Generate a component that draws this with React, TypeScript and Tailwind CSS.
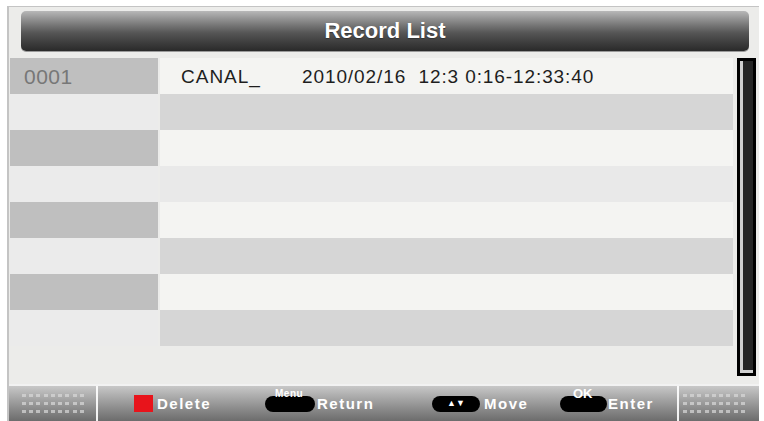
import React from 'react';

const leftShades = ['#bfbfbf', '#ebebeb', '#bfbfbf', '#ebebeb', '#bfbfbf', '#ebebeb', '#bfbfbf', '#ebebeb'];
const rightShades = ['#f4f4f2', '#d6d6d6', '#f4f4f2', '#e9e9e9', '#f4f4f2', '#d6d6d6', '#f4f4f2', '#d6d6d6'];

function DotBlock() {
  return (
    <div className="grid grid-cols-9 gap-x-[3px] gap-y-[5px] w-[62px]">
      {Array.from({ length: 27 }).map((_, i) => (
        <div key={i} className="h-[3px] w-[4px] bg-[#d8d8d8]/70" />
      ))}
    </div>
  );
}

export default function App() {
  return (
    <div className="w-[764px] h-[421px] bg-white overflow-hidden pt-[6px] pl-[7px] pr-[5px] font-['Liberation_Sans',Arial,sans-serif]">
      <div className="h-full bg-[#ececea] border-l-2 border-t border-[#c4c4c4] flex flex-col">
        {/* title bar */}
        <div className="ml-[12px] mr-[10px] mt-[4px] h-[40px] rounded-[5px] bg-linear-to-b from-[#b8b8b8] via-[#555555] via-55% to-[#2a2a2a] flex items-center justify-center shadow-[0_1px_0_#9a9a9a]">
          <span className="text-white text-[22px] font-bold leading-none [text-shadow:0_1px_1px_#333]">Record List</span>
        </div>

        {/* list */}
        <div className="mt-[7px] pl-[1px] flex">
          <div className="w-[723px] flex flex-col">
            {leftShades.map((shade, i) => (
              <div key={i} className="h-[36px] grid grid-cols-[148px_1fr] gap-x-[2px]">
                <div className="flex items-center pl-[14px]" style={{ backgroundColor: shade }}>
                  {i === 0 && (
                    <span className="text-[21px] text-[#777777] tracking-[0.5px] leading-none">0001</span>
                  )}
                </div>
                <div className="flex items-center" style={{ backgroundColor: rightShades[i] }}>
                  {i === 0 && (
                    <>
                      <span className="ml-[21px] w-[121px] text-[19px] text-[#1e1e1e] tracking-[1px] leading-none">CANAL_</span>
                      <span className="text-[19px] text-[#1e1e1e] tracking-[0.9px] leading-none whitespace-pre">2010/02/16  12:3 0:16-12:33:40</span>
                    </>
                  )}
                </div>
              </div>
            ))}
          </div>
          <div className="ml-[4px] w-[19px] h-[318px] bg-black p-[3px]">
            <div className="h-full border-l-[3px] border-b-[3px] border-[#d0d0d0] bg-[#262626]" />
          </div>
        </div>

        <div className="flex-1" />

        {/* footer */}
        <div className="h-[37px] border-t-2 border-[#f2f2f2] bg-linear-to-b from-[#c8c8c8] to-[#6c6c6c] flex items-center">
          <div className="ml-[13px]"><DotBlock /></div>
          <div className="ml-[12px] w-[2px] h-full bg-white/90" />

          <div className="ml-[36px] w-[19px] h-[17px] bg-[#e8141b]" />
          <span className="ml-[4px] w-[54px] text-white font-bold text-[15px] tracking-[1.5px] leading-none">Delete</span>

          <div className="ml-[54px] relative w-[50px] h-[16px] rounded-full bg-black">
            <span className="absolute -top-[7px] left-[10px] text-white font-bold text-[10px] leading-none tracking-[0.5px]">Menu</span>
          </div>
          <span className="ml-[2px] w-[57px] text-white font-bold text-[15px] tracking-[1.5px] leading-none">Return</span>

          <div className="ml-[58px] w-[48px] h-[16px] rounded-full bg-black flex items-center justify-center">
            <span className="text-white text-[9px] leading-none">▲▼</span>
          </div>
          <span className="ml-[4px] w-[43px] text-white font-bold text-[15px] tracking-[1.5px] leading-none">Move</span>

          <div className="ml-[33px] relative w-[47px] h-[16px] rounded-full bg-black">
            <span className="absolute -top-[9px] left-[13px] text-white font-bold text-[13px] leading-none">OK</span>
          </div>
          <span className="ml-[1px] w-[48px] text-white font-bold text-[15px] tracking-[1.5px] leading-none">Enter</span>

          <div className="ml-[21px] w-[2px] h-full bg-white/90" />
          <div className="ml-[4px]"><DotBlock /></div>
        </div>
      </div>
    </div>
  );
}
